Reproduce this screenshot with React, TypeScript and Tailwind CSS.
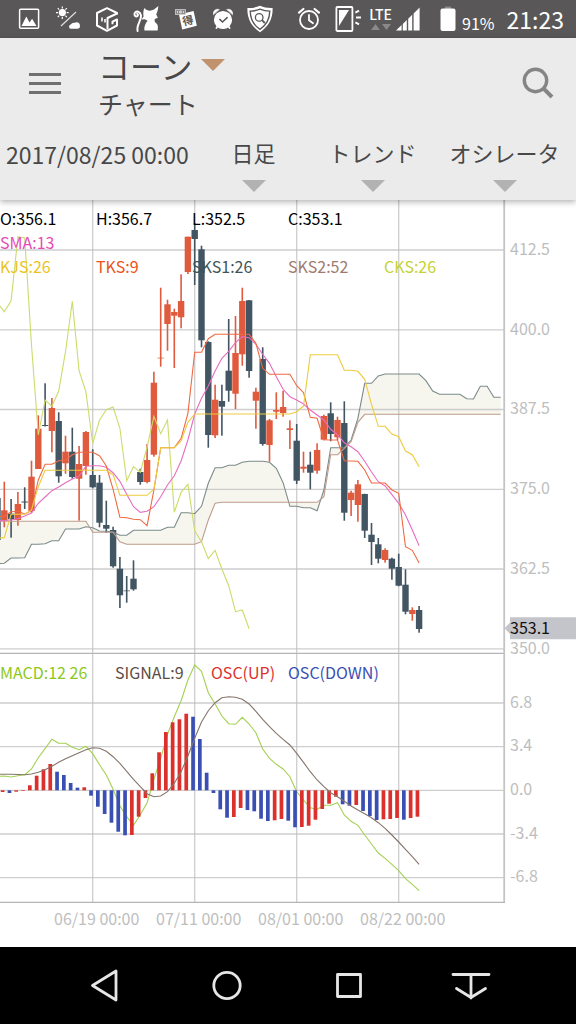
import React from "react";

const STEP = 6.8;
const xAt = (i: number) => 4.3 + i * STEP;

type Candle = [number, number, number, number, "u" | "d"];

// high, body top, body bottom, low, direction - first one is cut by the left edge
const CANDLES: Candle[] = [
  [498, 498, 540, 540, "d"],
  [481.7, 510.3, 520.3, 527.3, "u"],
  [499, 513.7, 519.3, 537.7, "d"],
  [492, 504, 520, 525.7, "u"],
  [487.3, 501.5, 502.5, 509, "d"],
  [460.7, 476.7, 511, 512.7, "u"],
  [415.3, 428.7, 469, 469, "u"],
  [383.3, 425, 426, 426.5, "d"],
  [398, 408, 431, 452.3, "u"],
  [412.3, 421, 476.3, 482.7, "d"],
  [435.7, 451.7, 463.3, 473.7, "u"],
  [427.7, 451.7, 477, 478.7, "d"],
  [446, 464, 478.7, 520.7, "u"],
  [431, 432, 466, 474.7, "u"],
  [449.3, 475, 487.3, 488.3, "d"],
  [475, 482.7, 522.7, 527.3, "d"],
  [500.7, 525, 528.7, 533, "d"],
  [526.7, 530, 566.3, 567.7, "d"],
  [557, 568.7, 595.3, 608, "d"],
  [576, 590.5, 591.2, 602.7, "d"],
  [560.3, 578.7, 589.3, 590.7, "d"],
  [468.7, 472, 482, 484.7, "d"],
  [444, 460, 482, 483.3, "u"],
  [371.7, 382.7, 454.7, 456.7, "u"],
  [287.7, 357.7, 358.4, 366.7, "u"],
  [299.7, 304.3, 324, 350.7, "u"],
  [308.7, 312, 315.7, 368, "u"],
  [274.3, 301, 317.3, 328.3, "u"],
  [236.7, 236.7, 272, 274, "u"],
  [223, 230, 239, 285, "d"],
  [245.7, 249.3, 340.3, 347.3, "d"],
  [341.3, 342, 435, 447.7, "d"],
  [384.7, 399.7, 435.3, 438, "u"],
  [384.7, 401, 406.7, 435.7, "d"],
  [319, 370.7, 390.7, 401.7, "d"],
  [316, 353, 393.7, 409, "u"],
  [287.7, 301, 354.3, 365.7, "u"],
  [300, 300.3, 371, 377.7, "d"],
  [387.7, 391.7, 400.7, 428.7, "u"],
  [347.3, 359, 444, 445.7, "d"],
  [419, 420.3, 445, 461.7, "u"],
  [392.3, 410, 411.7, 419, "u"],
  [390.7, 407, 413, 416.7, "u"],
  [420.3, 428.3, 430, 449, "u"],
  [424, 440.7, 480.7, 484, "d"],
  [451.7, 466.7, 468.7, 472.7, "u"],
  [451.7, 464.7, 472.7, 489.3, "d"],
  [443.3, 450, 470.7, 473.7, "u"],
  [414.7, 416, 439.7, 440.3, "u"],
  [402.3, 413.3, 434, 441.3, "d"],
  [416.7, 420, 437.3, 440.3, "u"],
  [401.3, 423, 512.7, 520.7, "d"],
  [490.7, 492.7, 500, 516, "u"],
  [480, 484.3, 505, 521.7, "u"],
  [493.7, 494, 530.7, 538, "d"],
  [523, 534.7, 542, 565, "d"],
  [538, 544.3, 558.7, 563.3, "d"],
  [548.3, 550, 560, 562.7, "u"],
  [557.7, 558.7, 568.7, 579.7, "d"],
  [553.7, 567, 585.7, 586.3, "d"],
  [569.3, 584.7, 611.7, 614.3, "d"],
  [607.3, 610, 614, 620.7, "u"],
  [606, 610, 629, 632.7, "d"],
];

const SMA = [
  520.7, 520.5, 520, 518.7, 516, 513, 503.3, 497, 490.7, 487, 482.7, 479, 476, 466.3, 465.7, 465.7,
  467.3, 472.7, 481.3, 494.3, 506.7, 512.3, 511.3, 506.7, 496.7, 485, 475.7, 461, 440, 414, 398.3,
  386, 371, 358.3, 351.3, 342.7, 336.7, 337.7, 344.3, 354.3, 363.3, 376.7, 389.3, 396.7, 400, 404,
  410, 415, 420, 429.3, 434.7, 442.7, 446.7, 451.7, 461.3, 472, 481.7, 486, 494.7, 503.3, 515, 530,
  545.7,
];

const TKS = [
  516.5, 516.3, 511.7, 511.3, 514, 510.7, 480, 464.3, 464.3, 460.7, 460, 454.7, 452.3, 452.3, 452.3,
  455.7, 466, 489.3, 517.3, 517.7, 519.3, 519.7, 525.7, 490, 447.7, 447.7, 447.7, 438.3, 413.3,
  352.3, 352.3, 338.7, 334.3, 334.3, 334.3, 334.3, 334.3, 334.3, 343.3, 368.3, 374.3, 374.3, 374.3,
  374.3, 385.7, 392.7, 417.3, 418.3, 439.7, 440, 440, 460.7, 461, 461.3, 470, 483, 483, 483, 490,
  493.3, 546.7, 550.3, 563,
];

const KJS = [
  538, 537.7, 514.3, 514.3, 514.3, 510, 486.7, 470.3, 470.3, 470.3, 470.3, 470.3, 470.3, 470.3,
  470.3, 470.3, 470.3, 474.7, 495.3, 495.3, 495.3, 495.3, 495.3, 489.3, 447.7, 447.7, 447.7, 441,
  422.3, 414, 414, 414, 414, 414, 414, 414, 414, 414, 414, 414, 414, 414, 414, 414, 411.7, 406,
  354.7, 354.7, 354.7, 354.7, 354.7, 370.3, 370.3, 371.3, 379.3, 404.3, 426.3, 426.3, 434, 436.7,
  451, 454.7, 466.7,
];

const CKS = [
  303, 311.7, 300.7, 237, 238, 345, 435, 400, 406.3, 391, 351.7, 301.3, 371, 391.7, 443.3, 420.3,
  409.7, 407, 428.3, 480.7, 466.7, 472.3, 447, 416.3, 433.7, 420, 512.3, 492.3, 484.3, 530.7, 541.7,
  558.7, 550.3, 569, 585.7, 611.7, 610, 628.7,
];

const SKS1 = [
  563.5, 563.3, 558, 558, 557.7, 544.3, 544.3, 543.7, 540.7, 540.7, 529, 529, 529, 526.7, 527.7,
  531, 531.3, 532, 535.3, 535.3, 530.3, 530.3, 530.3, 530.3, 530.3, 527.3, 527.3, 512.7, 512.7,
  513.7, 506.3, 483.3, 467.7, 467.7, 465.3, 465.3, 462.3, 461.3, 461.3, 461.3, 462.3, 468.3, 482.7,
  506.3, 506.3, 507.7, 507.7, 510.7, 490, 447.7, 447.7, 447.7, 440, 418.3, 383.3, 383.3, 376, 374,
  374, 374, 374, 374, 374, 380.7, 391, 394.3, 394.3, 394.3, 394.3, 398.7, 399, 386.3, 386.3, 397.3,
  397.3,
];

const SKS2 = [
  521.3, 521.3, 521.3, 521.3, 521.3, 521.3, 521.3, 521.3, 521.3, 521.3, 521.3, 521.3, 521.3, 521.3,
  532.3, 532.3, 532.3, 532.3, 541.7, 544.3, 544.3, 544.3, 544.3, 544.3, 544.3, 544.3, 544.3, 544.3,
  544.3, 544.3, 541.7, 520, 503.3, 502.3, 502.3, 502.3, 502.3, 502.3, 502.3, 502.3, 502.3, 502.3,
  502.3, 502.3, 502.3, 502.3, 502.3, 502.3, 496.7, 454.7, 454.7, 448.3, 441.7, 422.3, 414.3, 414.3,
  414.3, 414.3, 414.3, 414.3, 414.3, 414.3, 414.3, 414.3, 414.3, 414.3, 414.3, 414.3, 414.3, 414.3,
  414.3, 414.3, 414.3, 414.3, 414.3,
];

const MACD = [
  776.5, 776, 777, 775.7, 774.7, 769, 757.7, 748.7, 739.3, 743.3, 743.3, 747.3, 749.7, 746.3, 753.7,
  764.7, 775, 789.3, 805.7, 816.7, 825.3, 814.7, 802.7, 779.3, 758.3, 734.3, 716.7, 700.7, 680, 665,
  671.3, 692.7, 704, 716, 723.7, 724.3, 717.3, 724, 732.7, 749, 758.3, 764.3, 769, 776.7, 791.7,
  800, 807.7, 809.3, 805.3, 805.3, 802.7, 815, 821.3, 825.3, 835, 844, 853, 858.3, 864.3, 870.7,
  878.7, 884.3, 890.7,
];

const SIGNAL = [
  774.3, 774.3, 774.3, 774.5, 774.7, 774, 772.3, 769.7, 766.3, 762.3, 758.7, 755.7, 752.7, 749.7,
  747.7, 748.3, 751.3, 756.7, 763.3, 771.3, 779.3, 786.7, 793.7, 796.7, 796, 791.7, 783.3, 771.7,
  756, 738.3, 722, 710.7, 702.7, 697.7, 696.7, 697.3, 699.3, 704, 711.3, 719.3, 726.7, 733.3, 739.3,
  745, 753.3, 762.3, 771.7, 780, 786.7, 792.7, 796.7, 801.3, 806, 810, 813.7, 817.7, 822.7, 828.3,
  835, 842, 849.3, 856.7, 864.3,
];

// bar ends, measured against the zero line
const ZERO = 790.3;
const OSC: number[] = [
  792, 793, 791.7, 791, 785.3, 775.7, 769.3, 764, 771.7, 775, 783, 787.7, 787.3, 795.7, 806.7, 814,
  822.7, 831.7, 835.3, 835, 816.7, 798, 773.3, 752.3, 732, 722.3, 719.3, 713.7, 716.7, 739, 772.7,
  793, 809.3, 817.7, 817, 808, 810, 811.3, 818.7, 821, 820.3, 819, 820.7, 827.3, 827, 825.7, 819.7,
  809, 803.7, 796.7, 804.3, 805.7, 805, 811, 816, 820, 819.3, 819, 818, 819.7, 818, 816.7,
];

const PRICE_TICKS = [
  { label: "412.5", y: 250 },
  { label: "400.0", y: 329.8 },
  { label: "387.5", y: 409.5 },
  { label: "375.0", y: 489.3 },
  { label: "362.5", y: 569 },
  { label: "350.0", y: 648.8 },
];

const MACD_TICKS = [
  { label: "6.8", y: 703 },
  { label: "3.4", y: 746.7 },
  { label: "0.0", y: 790.3 },
  { label: "-3.4", y: 834 },
  { label: "-6.8", y: 877.7 },
];

const DATE_TICKS = [
  { label: "06/19 00:00", x: 92.7 },
  { label: "07/11 00:00", x: 194.7 },
  { label: "08/01 00:00", x: 296.7 },
  { label: "08/22 00:00", x: 398.7 },
];

const points = (ys: number[]) => ys.map((y, i) => `${xAt(i - 1).toFixed(1)},${y}`);

const CLOUD = [...points(SKS1), ...points(SKS2).reverse()].join(" ");

function Trace({ ys, color }: { ys: number[]; color: string }) {
  return <polyline points={points(ys).join(" ")} fill="none" stroke={color} strokeWidth="1.1" />;
}

function Grid({ ticks, top, bottom }: { ticks: { label: string; y: number }[]; top: number; bottom: number }) {
  return (
    <g stroke="#bdbdbd" strokeOpacity="0.75" strokeWidth="1.3">
      {DATE_TICKS.map((t) => (
        <line key={t.label} x1={t.x} x2={t.x} y1={top} y2={bottom} />
      ))}
      {ticks.map((t) => (
        <line key={t.label} x1="0" x2="504" y1={t.y} y2={t.y} />
      ))}
    </g>
  );
}

function PricePane() {
  return (
    <section className="relative">
      <svg viewBox="0 200 576 454" className="block w-full h-auto">
        <polygon points={CLOUD} fill="#f6f6ee" />
        <Grid ticks={PRICE_TICKS} top={200} bottom={654} />
        <line x1="0" x2="504" y1="653.4" y2="653.4" stroke="#b5b5b5" strokeWidth="1.3" />
        <line x1="504.2" x2="504.2" y1="200" y2="654" stroke="#c4c4c4" strokeWidth="1.8" />

        {CANDLES.map(([high, top, bottom, low, dir], i) => {
          const x = xAt(i - 1);
          const color = dir === "u" ? "#e05a3e" : "#425563";
          return (
            <g key={i} fill={color}>
              <rect x={x - 0.8} y={high} width="1.6" height={low - high} />
              <rect x={x - 3.2} y={top} width="6.4" height={bottom - top} />
            </g>
          );
        })}

        <Trace ys={SKS1} color="#7b8a8a" />
        <Trace ys={SKS2} color="#bf9c8c" />
        <Trace ys={CKS} color="#cddb6a" />
        <Trace ys={SMA} color="#e86cc0" />
        <Trace ys={TKS} color="#ef6a42" />
        <Trace ys={KJS} color="#edcb3e" />

        {/* Last price marker */}
        <path d="M504.5 628.3L510 622.5V617.3H576V639.3H510V634z" fill="#c4c5ca" />
        <text x="510" y="633.5" fontSize="16" fill="#111">
          353.1
        </text>

        <g fill="#bebebe" fontSize="16">
          {PRICE_TICKS.map((t) => (
            <text key={t.label} x="510" y={t.y + 4.7}>
              {t.label}
            </text>
          ))}
        </g>
      </svg>

      <div className="absolute inset-x-0 top-1.5 grid grid-cols-6 text-base leading-6 whitespace-nowrap">
        <span className="text-black">O:356.1</span>
        <span className="text-black">H:356.7</span>
        <span className="text-black">L:352.5</span>
        <span className="col-span-3 text-black">C:353.1</span>
        <span className="col-span-6 text-[#e54bb5]">SMA:13</span>
        <span className="text-[#eac41c]">KJS:26</span>
        <span className="text-[#ee5120]">TKS:9</span>
        <span className="text-[#3f5357]">SKS1:26</span>
        <span className="text-[#a07a6e]">SKS2:52</span>
        <span className="text-[#c5d236]">CKS:26</span>
      </div>
    </section>
  );
}

function MacdPane() {
  return (
    <section className="relative">
      <svg viewBox="0 654 576 293" className="block w-full h-auto">
        <Grid ticks={MACD_TICKS} top={654} bottom={902} />
        <line x1="0" x2="505" y1="902.4" y2="902.4" stroke="#b5b5b5" strokeWidth="1.3" />
        <line x1="504.2" x2="504.2" y1="654" y2="902" stroke="#c4c4c4" strokeWidth="1.8" />

        <Trace ys={MACD} color="#a3d152" />
        {OSC.map((y, i) => {
          const rising = y < (i ? OSC[i - 1] : 793);
          return (
            <rect
              key={i}
              x={xAt(i) - 3.5}
              y={Math.min(y, ZERO)}
              width="3.7"
              height={Math.abs(y - ZERO)}
              fill={rising ? "#dc302c" : "#3a4fb4"}
            />
          );
        })}
        <Trace ys={SIGNAL} color="#85756c" />

        <g fill="#bebebe" fontSize="16">
          {MACD_TICKS.map((t) => (
            <text key={t.label} x="510" y={t.y + 4.7}>
              {t.label}
            </text>
          ))}
          {DATE_TICKS.map((t) => (
            <text key={t.label} x={t.x + 4} y="925" textAnchor="middle">
              {t.label}
            </text>
          ))}
        </g>
      </svg>

      <div className="absolute inset-x-0 top-1.5 grid grid-cols-[115px_96px_77px_1fr] text-base leading-6 whitespace-nowrap">
        <span className="text-[#8cc820]">MACD:12 26</span>
        <span className="text-[#5e4b43]">SIGNAL:9</span>
        <span className="text-[#dc302c]">OSC(UP)</span>
        <span className="text-[#3a4fb4]">OSC(DOWN)</span>
      </div>
    </section>
  );
}

function AlarmIcon({ filled }: { filled?: boolean }) {
  return (
    <svg viewBox="0 0 24 24" className="w-6 h-6" fill="none" stroke="#fff" strokeWidth="1.8" strokeLinecap="round">
      <circle cx="12" cy="13" r={filled ? 8.2 : 9} fill={filled ? "#fff" : "none"} />
      {filled ? (
        <>
          <path d="M2.4 7.4a4.3 4.3 0 0 1 5.6-5zM21.600 7.400a4.300 4.300 0 0 0-5.600-5z" fill="#fff" strokeWidth="0.6" />
          <path d="M8.800 12.400l2.700 2.600 4.600-4.400" stroke="#595757" strokeWidth="1.500" />
          <path d="M6.500 19.500L5.400 21M17.500 19.500l1.100 1.500" />
        </>
      ) : (
        <>
          <path d="M2 5.6L6.4 2M22 5.6L17.6 2" strokeWidth="2.2" />
          <path d="M12 8v5.3l4 3" />
        </>
      )}
    </svg>
  );
}

function StatusBar() {
  return (
    <div className="flex h-[38px] items-center justify-between bg-[#595757] pl-[15px] pr-3 text-white">
      <div className="flex w-[259px] items-center justify-between">
        <svg viewBox="0 0 28 28" className="w-7 h-7">
          <rect x="4.6" y="4.2" width="19" height="19" rx="1" fill="none" stroke="#fff" strokeWidth="1.5" />
          <path d="M6.500 21l4.800-9.500 3.200 6 2.600-3.800 4.400 7.300z" fill="#fff" />
        </svg>

        <svg viewBox="0 0 28 28" className="w-7 h-7" stroke="#fff" strokeWidth="1.2">
          <circle cx="8.3" cy="7.6" r="3" fill="#fff" />
          <path d="M8.3 1.4v2M8.3 12v2M2 7.6h2M12.6 7.6h2M3.8 3.2l1.4 1.4M11.4 10.7l1.4 1.4M3.8 12.1l1.4-1.4M11.4 4.6l1.4-1.4" />
          <path d="M7 21L22 7" opacity="0.8" />
          <path d="M16.5 23.800a2.200 2.200 0 0 1 .2-4.200 4 4 0 0 1 4-1.800c2.600-1.600 5.600.4 5.200 3a2.600 2.600 0 0 1-2 3z" fill="#fff" stroke="none" />
        </svg>

        {/* Hexagon cube with a stylised G on its right face */}
        <svg viewBox="0 0 28 28" className="w-7 h-7" fill="none" stroke="#fff" strokeWidth="2" strokeLinejoin="round">
          <path d="M24 9.500V8L14 3.200 4 8v12.500L14 25.800l10-5.300v-6l-4.500 2.200v2.600" />
          <path d="M24 8.500L14.500 13v11" />
          <path d="M9 12.500v4M12 14v3.500" strokeWidth="1.600" />
        </svg>

        <svg viewBox="0 0 28 28" className="w-7 h-7">
          <path d="M12.4 3c2.6 3 6 3.4 9.6 1.6L26.4 1c-.4 3.2-.8 6-2.2 8.2l1.6 3.6-3 1.2c-.6 2 .2 3.6 2 4.8 1.4 1.4 1.2 4.6.8 6.8H12.4c-.6-3.6 1-7.2 3.2-9.8l-2.8-1.6-3.4.2 2.2-2.8c-.6-2.6-.4-6 .8-8.6z" fill="#fff" />
          <path d="M5.6 26c-1.6-6 4.2-10.6 3.4-15.6C8.2 6.6 5 5.6 3.2 7.4c-1.6 1.8-.4 4.2 1.4 4 1.6-.2 1.8-2 .6-2.6" fill="none" stroke="#fff" strokeWidth="2" strokeLinecap="round" />
        </svg>

        <svg viewBox="0 0 28 28" className="w-7 h-7">
          <path d="M7 9.4L21.6 6l3.2 14.8L10.2 24.6z" fill="#fff" />
          <rect x="3.4" y="4.6" width="10" height="4.8" fill="#8a8888" stroke="#d0d0d0" strokeWidth="0.8" />
          <path d="M5.5 6v2.2M7.7 6h1.6v2H7.700zM11.400 6v2.200" stroke="#fff" strokeWidth="0.7" fill="none" />
          <text x="10.5" y="19.500" fontSize="11" fontWeight="700" fill="#595757" transform="rotate(-13 16 16)">
            得
          </text>
        </svg>

        <AlarmIcon filled />

        <svg viewBox="0 0 28 28" className="w-7 h-7" fill="none" stroke="#fff">
          <path d="M14 .8c4 1.8 8.200 2.400 12.600 2.200.4 10-3.600 18.600-12.600 24.200C5 21.600 1 13 1.400 3 5.800 3.200 10 2.600 14 .8z" fill="#fff" stroke="none" />
          <path d="M14 4.200c3.200 1.300 6.400 1.900 9.800 1.900-.1 7.800-3.300 14-9.800 18.200C7.500 20.100 4.300 13.900 4.200 6.100 7.600 6.100 10.800 5.500 14 4.200z" stroke="#595757" strokeWidth="1.400" />
          <circle cx="13.200" cy="12.400" r="3.800" fill="#fff" stroke="#595757" strokeWidth="1.300" />
          <path d="M16 15.200l2.800 2.800" stroke="#595757" strokeWidth="1.800" />
        </svg>
      </div>

      <div className="flex items-center">
        <AlarmIcon />
        <svg viewBox="0 0 26 28" className="ml-3.5 w-[26px] h-7">
          <rect x="1.4" y="2" width="16" height="24" rx="1" fill="none" stroke="#fff" strokeWidth="1.8" />
          <path d="M4 5h10L4 21z" fill="#fff" />
          <path d="M20.4 7.6l3.6-2M21 12.4h5M20.4 17.4l3.6 2" stroke="#fff" strokeWidth="2" />
        </svg>
        <div className="ml-2 flex flex-col items-center">
          <span className="text-sm leading-4 font-medium">LTE</span>
          <svg viewBox="0 0 20 6" className="w-5 h-1.5 my-0.5" fill="#8b8989">
            <path d="M0 6l4.5-6L9 6zM11 0h9l-4.5 6z" />
          </svg>
        </div>
        <svg viewBox="0 0 24 24" className="ml-1 w-6 h-6" fill="#fff">
          <path d="M0 23.5L5.600 18v5.500zM6.800 17l4-4v10.500h-4zM12.200 11.700l4-4v15.800h-4zM17.600 6.400L23.600.5v23h-6z" />
        </svg>
        <svg viewBox="0 0 16 26" className="ml-5 w-4 h-[26px]">
          <rect x="5" y="0.5" width="6" height="3" fill="#8b8989" />
          <rect x="0.5" y="2.5" width="15" height="22.5" rx="2" fill="#fff" />
        </svg>
        <span className="ml-1.5 mt-2 text-base leading-5">91%</span>
        <span className="ml-3 text-[23px] leading-6">21:23</span>
      </div>
    </div>
  );
}

function Caret({ className }: { className: string }) {
  return (
    <svg viewBox="0 0 24 12" className={`w-6 h-3 pointer-events-none ${className}`}>
      <path d="M0 0h24L12 12z" fill="currentColor" />
    </svg>
  );
}

function Picker({ label, options, className }: { label: string; options: string[]; className: string }) {
  return (
    <label className={`flex flex-col items-center gap-3.5 ${className}`}>
      <select aria-label={label} className="appearance-none bg-transparent text-center text-[22px] leading-7">
        {options.map((o) => (
          <option key={o}>{o}</option>
        ))}
      </select>
      <Caret className="text-[#b2b2b2]" />
    </label>
  );
}

function Header() {
  return (
    <header className="relative z-10 bg-[#ebebeb] text-[#484848] shadow-[0_2px_6px_rgba(0,0,0,0.3)]">
      <div className="flex items-center justify-between pt-[7px] pl-[29px] pr-[21px]">
        <div className="flex items-center gap-[37px]">
          <button type="button" aria-label="メニュー" className="flex flex-col gap-1.5">
            <span className="block h-[3px] w-8 bg-[#6f6f6f]" />
            <span className="block h-[3px] w-8 bg-[#6f6f6f]" />
            <span className="block h-[3px] w-8 bg-[#6f6f6f]" />
          </button>
          <div>
            <label className="flex items-center gap-1.5">
              <select aria-label="銘柄" className="appearance-none bg-transparent text-[32px] leading-10">
                <option>コーン</option>
              </select>
              <Caret className="text-[#c1926e]" />
            </label>
            <h1 className="text-[25px] leading-9">チャート</h1>
          </div>
        </div>
        <button type="button" aria-label="検索">
          <svg viewBox="0 0 34 34" className="w-[34px] h-[34px]" fill="none" stroke="#858585" strokeWidth="3.4">
            <circle cx="14.5" cy="14.5" r="11.2" />
            <path d="M22.4 22.4L31 31" strokeWidth="4" />
          </svg>
        </button>
      </div>
      <div className="flex items-start pt-[17px] pb-2 pl-1.5 pr-4">
        <time className="grow text-[23px] leading-8 whitespace-nowrap">2017/08/25 00:00</time>
        <Picker label="足種" options={["日足", "週足", "月足"]} className="mr-13" />
        <Picker label="トレンド指標" options={["トレンド"]} className="mr-8" />
        <Picker label="オシレータ指標" options={["オシレータ"]} className="" />
      </div>
    </header>
  );
}

function NavBar() {
  return (
    <nav className="flex h-[77px] items-center justify-center bg-black">
      {[
        { name: "戻る", d: "M31 5V34L7.5 19.500z" },
        { name: "ホーム", d: "M33.2 19.500a13.200 13.200 0 1 1-26.400 0a13.200 13.200 0 1 1 26.400 0z" },
        { name: "履歴", d: "M8.500 8.500h23v22h-23z" },
        { name: "閉じる", d: "M2 8.500H38M20 8.500V32M5.500 22.500L20 31.500L34.500 22.500" },
      ].map((b) => (
        <button key={b.name} type="button" aria-label={b.name} className="flex w-[122px] justify-center">
          <svg viewBox="0 0 40 40" className="w-10 h-10" fill="none" stroke="#e6e6e6" strokeWidth="2.8" strokeLinecap="round" strokeLinejoin="round">
            <path d={b.d} />
          </svg>
        </button>
      ))}
    </nav>
  );
}

export default function App() {
  return (
    <div className="min-h-screen flex flex-col bg-white font-['Noto_Sans_CJK_JP',sans-serif]">
      <StatusBar />
      <Header />
      <main className="grow">
        <PricePane />
        <MacdPane />
      </main>
      <NavBar />
    </div>
  );
}
